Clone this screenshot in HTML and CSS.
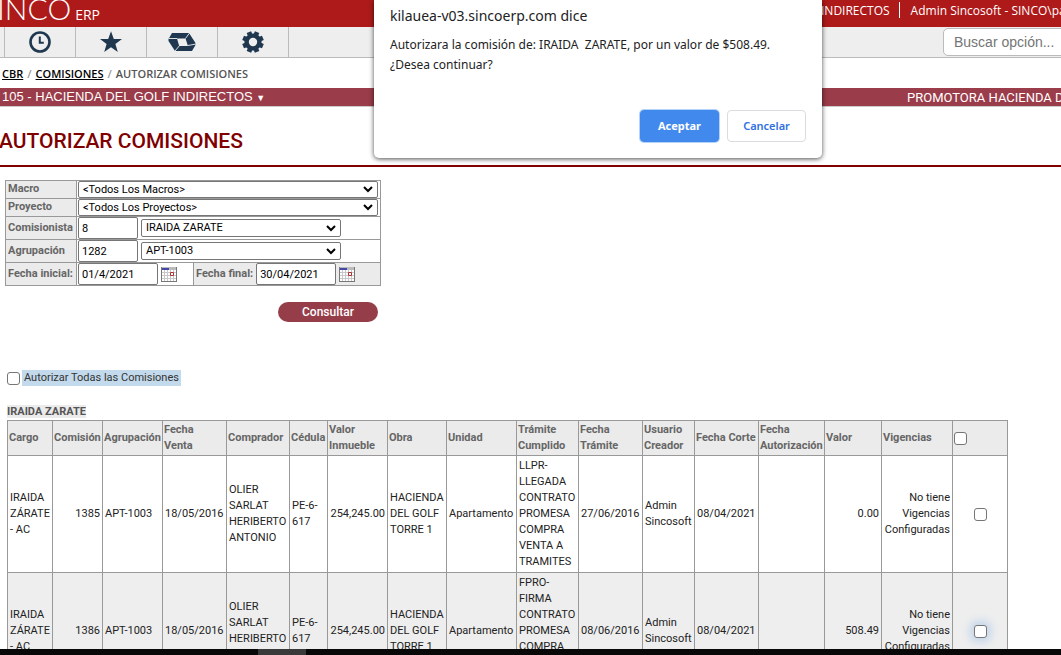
FILE: index.html
```html
<!DOCTYPE html>
<html lang="es">
<head>
<meta charset="utf-8">
<title>Autorizar Comisiones</title>
<link rel="stylesheet" href="styles.css">
</head>
<body>
<div class="page">
  <header class="topbar">
    <div class="logo">INCO<span class="logo-erp">ERP</span></div>
    <div class="account"><span class="account-item">INDIRECTOS</span><span class="account-item account-user">Admin Sincosoft - SINCO\pa</span></div>
  </header>
  <nav class="toolbar" aria-label="Accesos">
    <button class="tool" type="button" aria-label="Recientes">
      <svg width="24" height="24" viewBox="0 0 24 24"><circle cx="12" cy="12" r="9.5" fill="none" stroke="#1f3850" stroke-width="2.6"/><path d="M11.8 6.5v6.3h4" fill="none" stroke="#1f3850" stroke-width="2"/></svg>
    </button>
    <button class="tool" type="button" aria-label="Favoritos">
      <svg width="24" height="24" viewBox="0 0 24 24"><path fill="#1f3850" d="M12 1.2l2.8 7.8h8.2l-6.600 5 2.400 8L12 17.300l-6.800 4.700 2.400-8L1 9h8.200z"/></svg>
    </button>
    <button class="tool" type="button" aria-label="Procesos">
      <svg width="28" height="24" viewBox="0 0 28 24"><path fill="#1f3850" fill-rule="evenodd" d="M4 3h17l6.500 10v2L24 21H7L.5 11V9zM9 8.500L11.200 16H20L17.500 8.500z"/><path d="M1 8.500h8M21.500 3l-4 5.500M20 15.500l8-1.500M11.200 16L7 21" stroke="#eee" stroke-width=".9" fill="none"/></svg>
    </button>
    <button class="tool" type="button" aria-label="Configuración">
      <svg width="24" height="24" viewBox="-12 -12 24 24"><circle r="6.400" fill="none" stroke="#1f3850" stroke-width="4.400"/><g fill="none" stroke="#1f3850" stroke-width="4.800" stroke-linejoin="round"><path transform="rotate(22.500)" d="M0-10.700V-7M0 10.700V7M-10.700 0H-7M10.700 0H7"/><path transform="rotate(67.500)" d="M0-10.700V-7M0 10.700V7M-10.700 0H-7M10.700 0H7"/></g></svg>
    </button>
    <input class="search" type="text" placeholder="Buscar opción..." aria-label="Buscar opción">
  </nav>
  <nav class="crumbs" aria-label="Ruta">
    <a href="#">CBR</a><span class="slash">/</span><a href="#">COMISIONES</a><span class="slash">/</span><span>AUTORIZAR COMISIONES</span>
  </nav>
  <div class="projectbar">
    <button class="project" type="button">105 - HACIENDA DEL GOLF INDIRECTOS <span class="caret">▼</span></button>
    <span class="company">PROMOTORA HACIENDA D</span>
  </div>
  <main class="content">
    <h1 class="title">AUTORIZAR COMISIONES</h1>
    <form class="filters">
      <table class="filter-table">
        <colgroup><col class="f-label"><col class="f-start"><col class="f-end"></colgroup>
        <tr class="short"><th><label for="macro">Macro</label></th><td colspan="2"><select id="macro" class="wide"><option>&lt;Todos Los Macros&gt;</option></select></td></tr>
        <tr class="short"><th><label for="proyecto">Proyecto</label></th><td colspan="2"><select id="proyecto" class="wide"><option>&lt;Todos Los Proyectos&gt;</option></select></td></tr>
        <tr><th><label for="comisionista">Comisionista</label></th><td colspan="2"><div class="line"><input id="comisionista" class="code" type="text" value="8"><select aria-label="Nombre del comisionista"><option>IRAIDA ZARATE</option></select></div></td></tr>
        <tr><th><label for="agrupacion">Agrupación</label></th><td colspan="2"><div class="line"><input id="agrupacion" class="code" type="text" value="1282"><select aria-label="Nombre de la agrupación"><option>APT-1003</option></select></div></td></tr>
        <tr><th><label for="inicial">Fecha inicial:</label></th>
          <td><div class="line"><input id="inicial" class="date" type="text" value="01/4/2021"><button class="cal" type="button" aria-label="Elegir fecha inicial"><svg width="16" height="15" viewBox="0 0 16 15"><path fill="#fff" d="M0 0h16v15H0z"/><path d="M1 5.500h14M1 8.500h14M1 11.500h14M3.500 3v11M6.500 3v11M9.500 3v11M12.500 3v11" stroke="#c8c8c8"/><path fill="#bbb" d="M0 0h16v3H0z"/><path fill="#4448a8" d="M1 1h7v2H1z"/><path d="M.5 0v14.500M0 14.500h16M15.500 0v15" stroke="#777" fill="none"/><path d="M9.500 5.500h3v3h-3z" stroke="#a33" fill="#fff"/></svg></button></div></td>
          <td class="shade"><div class="line final"><label for="final">Fecha final:</label><input id="final" class="date" type="text" value="30/04/2021"><button class="cal" type="button" aria-label="Elegir fecha final"><svg width="16" height="15" viewBox="0 0 16 15"><path fill="#fff" d="M0 0h16v15H0z"/><path d="M1 5.500h14M1 8.500h14M1 11.500h14M3.500 3v11M6.500 3v11M9.500 3v11M12.500 3v11" stroke="#c8c8c8"/><path fill="#bbb" d="M0 0h16v3H0z"/><path fill="#4448a8" d="M1 1h7v2H1z"/><path d="M.5 0v14.500M0 14.500h16M15.500 0v15" stroke="#777" fill="none"/><path d="M9.500 5.500h3v3h-3z" stroke="#a33" fill="#fff"/></svg></button></div></td></tr>
      </table>
      <button class="consult" type="button">Consultar</button>
    </form>
    <div class="all"><input class="check" type="checkbox" id="todas"><label for="todas">Autorizar Todas las Comisiones</label></div>
    <h2 class="person"><span>IRAIDA ZARATE</span></h2>
    <table class="grid">
      <colgroup><col class="w45"><col class="w50"><col class="w60"><col class="w64"><col class="w63"><col class="w38"><col class="w60"><col class="w59"><col class="w70"><col class="w62"><col class="w64"><col class="w52"><col class="w64"><col class="w66"><col class="w57"><col class="w71"><col class="w55"></colgroup>
      <thead><tr><th>Cargo</th><th>Comisión</th><th>Agrupación</th><th>Fecha<br>Venta</th><th>Comprador</th><th>Cédula</th><th>Valor<br>Inmueble</th><th>Obra</th><th>Unidad</th><th>Trámite<br>Cumplido</th><th>Fecha<br>Trámite</th><th>Usuario<br>Creador</th><th>Fecha Corte</th><th>Fecha<br>Autorización</th><th>Valor</th><th>Vigencias</th><th><input class="check" type="checkbox" aria-label="Seleccionar todo"></th></tr></thead>
      <tbody>
        <tr><td>IRAIDA<br>ZÁRATE<br>- AC</td><td class="num">1385</td><td>APT-1003</td><td>18/05/2016</td><td>OLIER<br>SARLAT<br>HERIBERTO<br>ANTONIO</td><td>PE-6-<br>617</td><td class="num">254,245.00</td><td>HACIENDA<br>DEL GOLF<br>TORRE 1</td><td>Apartamento</td><td>LLPR-<br>LLEGADA<br>CONTRATO<br>PROMESA<br>COMPRA<br>VENTA A<br>TRAMITES</td><td>27/06/2016</td><td>Admin<br>Sincosoft</td><td>08/04/2021</td><td></td><td class="num">0.00</td><td class="num">No tiene<br>Vigencias<br>Configuradas</td><td class="pick"><input class="check" type="checkbox" aria-label="Autorizar comisión 1385"></td></tr>
        <tr><td>IRAIDA<br>ZÁRATE<br>- AC</td><td class="num">1386</td><td>APT-1003</td><td>18/05/2016</td><td>OLIER<br>SARLAT<br>HERIBERTO<br>ANTONIO</td><td>PE-6-<br>617</td><td class="num">254,245.00</td><td>HACIENDA<br>DEL GOLF<br>TORRE 1</td><td>Apartamento</td><td>FPRO-<br>FIRMA<br>CONTRATO<br>PROMESA<br>COMPRA<br>VENTA A<br>TRAMITES</td><td>08/06/2016</td><td>Admin<br>Sincosoft</td><td>08/04/2021</td><td></td><td class="num">508.49</td><td class="num">No tiene<br>Vigencias<br>Configuradas</td><td class="pick"><input class="check active" type="checkbox" aria-label="Autorizar comisión 1386"></td></tr>
      </tbody>
    </table>
  </main>
  <footer class="bottombar"><span class="bottombar-tab"></span></footer>
</div>
<div class="dialog" role="dialog" aria-labelledby="dialog-title">
  <h2 class="dialog-title" id="dialog-title">kilauea-v03.sincoerp.com dice</h2>
  <p class="dialog-text">Autorizara la comisión de: IRAIDA&nbsp; ZARATE, por un valor de $508.49.<br>¿Desea continuar?</p>
  <div class="dialog-actions"><button class="btn primary" type="button">Aceptar</button><button class="btn" type="button">Cancelar</button></div>
</div>
</body>
</html>
```
FILE: styles.css
```css
* { box-sizing: border-box; }
body { margin: 0; background: #fff; color: #222; font-family: Roboto, sans-serif; font-size: 11px; line-height: 16px; }
button, input, select { font: inherit; margin: 0; }
h1, h2, p { margin: 0; }

.page { display: flex; flex-direction: column; height: 100vh; overflow: hidden; }
.topbar { display: flex; justify-content: space-between; flex: none; height: 27px; background: #ae1a1a; color: #fff; overflow: hidden; white-space: nowrap; }
.logo { display: flex; align-items: baseline; gap: 4px; margin-left: -3px; font-family: Lato, sans-serif; font-size: 30px; font-weight: 300; line-height: 16px; }
.logo-erp { font-family: "Open Sans", sans-serif; font-size: 14px; font-weight: 400; }
.account { display: flex; width: 240px; font-family: "Open Sans", sans-serif; font-size: 12px; line-height: 22px; }
.account-user { margin-left: 9px; padding-left: 12px; background: linear-gradient(#fff, #fff) 0 2px / 1px 16px no-repeat; }

.toolbar { display: flex; flex: none; height: 31px; padding-left: 4px; background: #eee; border-bottom: 1px solid #bbb; overflow: hidden; }
.tool { flex: none; width: 71px; padding: 0; border: 0; border-left: 1px solid #bbb; background: none; display: flex; align-items: center; justify-content: center; }
.tool:nth-of-type(4) { width: 72px; border-right: 1px solid #bbb; }
.search { flex: none; width: 140px; height: 28px; margin: 1px -22px 0 auto; padding: 0 10px; border: 1px solid #bbb; border-radius: 5px; background: #fff; font-family: "Liberation Sans", Arial, sans-serif; font-size: 14px; }
.search::placeholder { color: #757575; }

.crumbs { flex: none; display: flex; align-items: center; height: 30px; padding: 2px 2px 0; font-family: "Open Sans", sans-serif; font-size: 11px; font-weight: 600; color: #555; }
.crumbs a { color: #000; }
.slash { margin: 0 4px; color: #999; }

.projectbar { flex: none; display: flex; justify-content: space-between; height: 19px; background: #9a3c49; border-bottom: 1px solid #ccc; color: #fff; overflow: hidden; white-space: nowrap; }
.project { padding: 0 2px; border: 0; background: none; color: #fff; font-family: "Liberation Sans", Arial, sans-serif; font-size: 13px; line-height: 18px; }
.caret { font-size: 9px; }
.company { width: 154px; font-size: 13px; line-height: 19px; }

.content { flex: 1; min-height: 0; overflow: hidden; }
.title { height: 60px; margin-left: -1px; padding-top: 18px; border-bottom: 2px solid #800000; color: #800000; font-size: 21px; font-weight: 500; line-height: 32px; }

.filters { width: 376px; margin: 13px 0 0 5px; }
.filter-table, .grid { border-collapse: collapse; table-layout: fixed; }
.filter-table { width: 100%; }
.filter-table th, .filter-table td { height: 23px; padding: 0 2px; border: 1px solid #999; text-align: left; }
.filter-table td { padding-left: 1px; }
.filter-table .shade { padding-left: 2px; }
.filter-table .short th, .filter-table .short td { height: 18px; line-height: 15px; }
.filter-table .short th { vertical-align: top; }
.filter-table th, .shade { background: #ebebeb; color: #666; font-weight: 700; }
.filter-table th { white-space: nowrap; }
.f-label { width: 71px; }
.f-start { width: 117px; }
.f-end { width: 187px; }
.line { display: flex; align-items: center; gap: 3px; }
.line input, .filter-table select { border: 1px solid #767676; border-radius: 2px; background: #fff; color: #000; }
.line input { height: 22px; padding: 0 3px; font-weight: 400; }
.filter-table .code { width: 60px; }
.filter-table .date { width: 80px; }
.filter-table select { appearance: none; width: 200px; height: 18px; padding: 0 4px; background: #fff url("data:image/svg+xml,%3Csvg xmlns='http://www.w3.org/2000/svg' width='10' height='7'%3E%3Cpath d='M1 1l4 4 4-4' fill='none' stroke='black' stroke-width='2'/%3E%3C/svg%3E") right 4px center no-repeat; line-height: 16px; }
.filter-table select.wide { display: block; width: 100%; height: 17px; line-height: 15px; }
.cal { display: flex; padding: 0; border: 0; background: none; }
.consult { display: block; width: 100px; height: 20px; margin: 16px 3px 0 auto; padding: 0; border: 0; border-radius: 10px; background: #963d4a; color: #fff; font-size: 12px; font-weight: 500; }

.check { appearance: none; flex: none; display: block; width: 13px; height: 13px; border: 1px solid #767676; border-radius: 3px; background: #fff; }
.check:checked { background: #1a73e8; }
.all { display: flex; align-items: center; gap: 2px; margin: 48px 0 0 7px; }
.all label { padding: 0 2px; background: #c3daec; color: #333; }
.person { margin: 18px 0 0 7px; color: #555; font-size: 11px; font-weight: 700; }
.person span { background: #ebebeb; }

.grid { width: 1000px; margin-left: 7px; }
.grid th, .grid td { border: 1px solid #999; white-space: nowrap; }
.grid th { height: 35px; padding: 0 1px; background: #ebebeb; color: #666; font-weight: 700; text-align: left; }
.grid td { height: 117px; padding: 0 2px; }
.grid tbody tr:nth-child(2) { background: #eee; }
.grid .num { text-align: right; }
.pick .check { margin: 0 auto; }
.check.active { box-shadow: 0 0 8px 4px #c3d5ea; }
.w38 { width: 38px; } .w45 { width: 45px; } .w50 { width: 50px; } .w52 { width: 52px; }
.w55 { width: 55px; } .w57 { width: 57px; } .w59 { width: 59px; } .w60 { width: 60px; }
.w62 { width: 62px; } .w63 { width: 63px; } .w64 { width: 64px; } .w66 { width: 66px; }
.w70 { width: 70px; } .w71 { width: 71px; }

.bottombar { flex: none; height: 6px; background: #080808; }
.bottombar-tab { display: block; width: 48px; height: 6px; margin-left: 258px; background: #3a3a3a; }

.dialog { position: absolute; top: 0; left: 374px; width: 448px; padding: 6px 16px 16px; background: #fff; border-radius: 0 0 5px 5px; box-shadow: 0 1px 5px rgba(0, 0, 0, .7); font-family: "Noto Sans", "Open Sans", sans-serif; color: #222; }
.dialog-title { font-size: 14px; font-weight: 400; line-height: 20px; }
.dialog-text { padding-top: 9px; font-size: 12px; line-height: 20px; white-space: nowrap; }
.dialog-actions { display: flex; justify-content: flex-end; gap: 8px; padding-top: 35px; }
.btn { width: 79px; height: 32px; padding: 0; border: 1px solid #dadce0; border-radius: 4px; background: #fff; color: #3070e0; font-size: 11px; font-weight: 600; }
.btn.primary { border-color: #3f88ec; background: #4189ec; color: #fff; box-shadow: 0 0 0 1px #b5d2f8; font-weight: 700; }
```
